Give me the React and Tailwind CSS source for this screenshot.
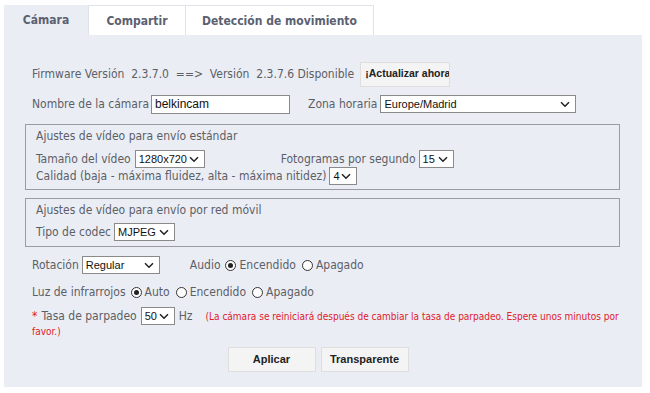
import React from "react";

function Chevron() {
  return (
    <svg width="10" height="7" viewBox="0 0 10 7" className="shrink-0">
      <path d="M1 1.2 L5 5.2 L9 1.2" fill="none" stroke="#222" strokeWidth="1.5" />
    </svg>
  );
}

function Select({ value, width }) {
  return (
    <div
      className="flex h-[18px] shrink-0 items-center justify-between border border-[#8a8a8a] bg-white pl-[3px] pr-[5px] font-['Liberation_Sans',Arial,sans-serif] text-[11px] text-[#111]"
      style={{ width }}
    >
      <span>{value}</span>
      <Chevron />
    </div>
  );
}

function Radio({ checked, label }) {
  return (
    <span className="flex shrink-0 items-center gap-[3px]">
      <span className="flex h-[11px] w-[11px] items-center justify-center rounded-full border border-[#333] bg-white">
        {checked ? <span className="h-[5px] w-[5px] rounded-full bg-[#222]" /> : null}
      </span>
      <span>{label}</span>
    </span>
  );
}

function Button({ children, className }) {
  return (
    <button
      type="button"
      className={
        "h-[25px] shrink-0 overflow-hidden whitespace-nowrap border border-[#dedede] bg-[#f4f4f4] font-['Liberation_Sans',Arial,sans-serif] font-bold text-[#222] " +
        (className || "")
      }
    >
      {children}
    </button>
  );
}

export default function App() {
  return (
    <div className="h-[393px] w-[650px] bg-white pl-[4px] pt-[5px] font-['DejaVu_Sans_Condensed','DejaVu_Sans',sans-serif] text-[12px] text-[#5b5f66]">
      <div className="flex h-[30px] text-[12px] font-bold text-[#5b6170]">
        <div className="flex w-[84px] items-center justify-center bg-[#ebedf5]">Cámara</div>
        <div className="flex w-[98px] items-center justify-center border border-b-0 border-[#e0e2ea] bg-white">
          Compartir
        </div>
        <div className="flex w-[188px] items-center justify-center border border-b-0 border-l-0 border-[#e0e2ea] bg-white">
          Detección de movimiento
        </div>
      </div>

      <div className="h-[352px] w-[638px] bg-[#ebedf5] pt-[27px]">
        {/* firmware */}
        <div className="flex h-[24px] items-center pl-[28px]">
          <span className="whitespace-pre">Firmware Versión  2.3.7.0  ==>  Versión  2.3.7.6 Disponible</span>
          <Button className="ml-[6px] w-[90px] pl-[4px] pr-0 text-left text-[10.5px]">¡Actualizar ahora</Button>
        </div>

        {/* name + zone */}
        <div className="mt-[8px] flex h-[20px] items-center pl-[28px]">
          <span>Nombre de la cámara</span>
          <div className="ml-[2px] flex h-[19px] w-[139px] items-center border border-[#8a8a8a] bg-white pl-[3px] font-['Liberation_Sans',Arial,sans-serif] text-[12px] text-[#111]">
            belkincam
          </div>
          <span className="ml-[18px]">Zona horaria</span>
          <div className="ml-[3px]">
            <Select value="Europe/Madrid" width={196} />
          </div>
        </div>

        {/* fieldset standard */}
        <div className="ml-[21px] mt-[10px] h-[66px] w-[595px] border border-[#9a9ca3] pl-[10px] pt-[2px]">
          <div className="h-[18px] leading-[18px]">Ajustes de vídeo para envío estándar</div>
          <div className="mt-[5px] flex h-[18px] items-center">
            <span>Tamaño del vídeo</span>
            <div className="ml-[4px]">
              <Select value="1280x720" width={70} />
            </div>
            <span className="ml-[76px]">Fotogramas por segundo</span>
            <div className="ml-[3px]">
              <Select value="15" width={35} />
            </div>
          </div>
          <div className="mt-[-1px] flex h-[18px] items-center">
            <span>Calidad (baja - máxima fluidez, alta - máxima nitidez)</span>
            <div className="ml-[3px]">
              <Select value="4" width={28} />
            </div>
          </div>
        </div>

        {/* fieldset mobile */}
        <div className="ml-[21px] mt-[8px] h-[49px] w-[595px] border border-[#9a9ca3] pl-[10px] pt-[2px]">
          <div className="h-[18px] leading-[18px]">Ajustes de vídeo para envío por red móvil</div>
          <div className="mt-[4px] flex h-[18px] items-center">
            <span>Tipo de codec</span>
            <div className="ml-[3px]">
              <Select value="MJPEG" width={61} />
            </div>
          </div>
        </div>

        {/* rotation + audio */}
        <div className="mt-[8px] flex h-[20px] items-center pl-[28px]">
          <span>Rotación</span>
          <div className="ml-[3px]">
            <Select value="Regular" width={78} />
          </div>
          <span className="ml-[30px]">Audio</span>
          <div className="ml-[5px] flex items-center gap-[6px]">
            <Radio checked label="Encendido" />
            <Radio label="Apagado" />
          </div>
        </div>

        {/* infrared */}
        <div className="mt-[7px] flex h-[20px] items-center pl-[28px]">
          <span>Luz de infrarrojos</span>
          <div className="ml-[5px] flex items-center gap-[6px]">
            <Radio checked label="Auto" />
            <Radio label="Encendido" />
            <Radio label="Apagado" />
          </div>
        </div>

        {/* flicker */}
        <div className="mt-[4px] pl-[28px] pr-[24px]">
          <div className="flex h-[20px] items-center whitespace-nowrap">
            <span className="shrink-0 text-[#e02020]">*</span>
            <span className="ml-[4px] shrink-0">Tasa de parpadeo</span>
            <div className="ml-[4px]">
              <Select value="50" width={34} />
            </div>
            <span className="ml-[4px] shrink-0">Hz</span>
            <span className="ml-[13px] shrink-0 text-[10px] text-[#e0202a]">
              (La cámara se reiniciará después de cambiar la tasa de parpadeo. Espere unos minutos por
            </span>
          </div>
          <div className="text-[10px] leading-[12px] text-[#e0202a]">favor.)</div>
        </div>

        {/* actions */}
        <div className="mt-[9px] flex justify-center gap-[5px] pr-[10px]">
          <Button className="w-[88px] text-center text-[11px]">Aplicar</Button>
          <Button className="w-[88px] text-center text-[11px]">Transparente</Button>
        </div>
      </div>
    </div>
  );
}
